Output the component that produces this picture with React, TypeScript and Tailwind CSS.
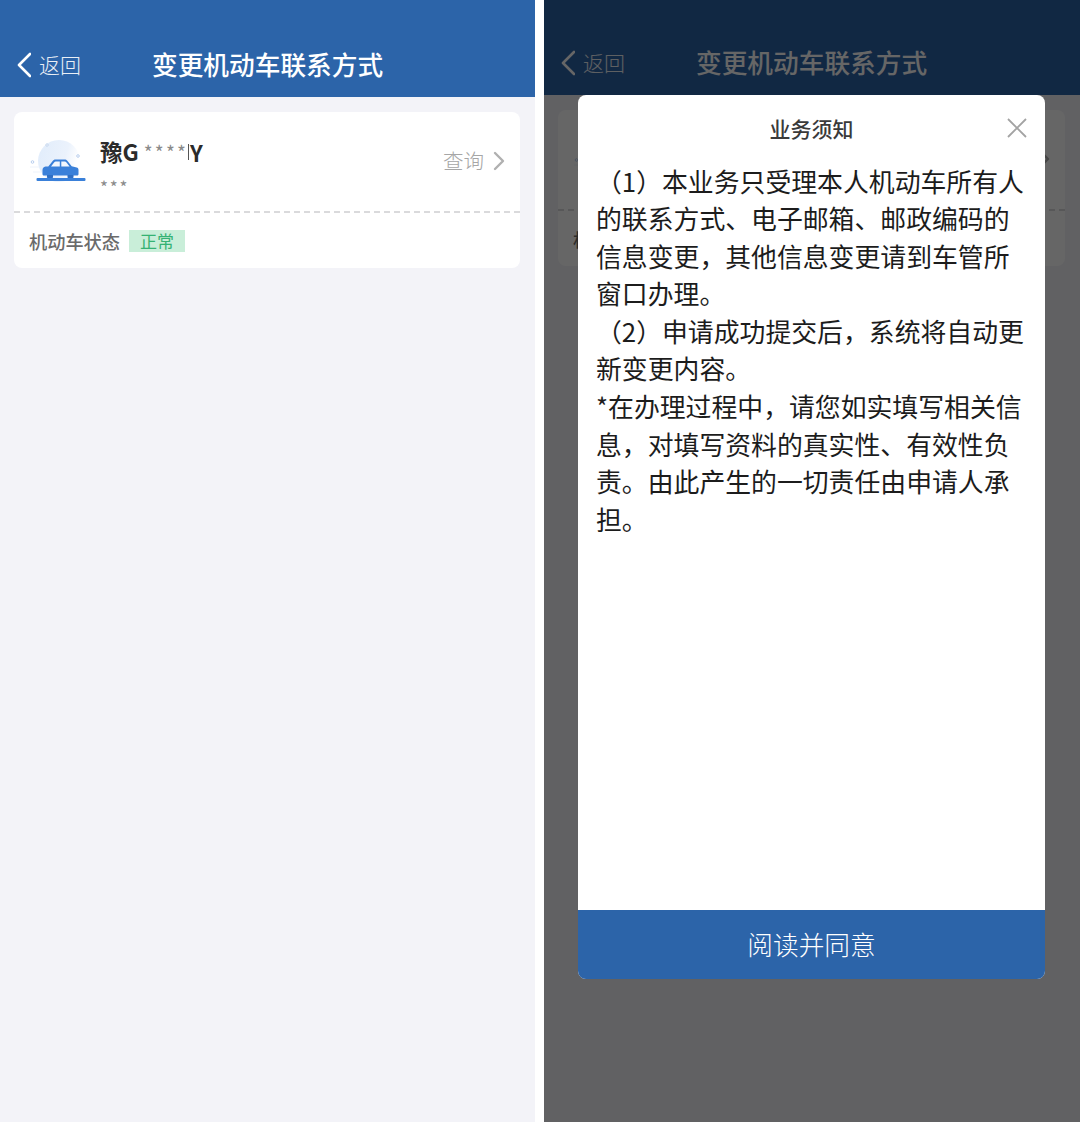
const font = "font-['Noto_Sans_CJK_SC','Noto_Sans',sans-serif]";

function CarIcon() {
  return (
    <svg viewBox="0 0 60 50" className="h-[50px] w-[60px]" aria-hidden>
      <defs>
        <linearGradient id="halo" x1="0" y1="0" x2="1" y2="0.3">
          <stop offset="0" stopColor="#e0ecfb" />
          <stop offset="0.7" stopColor="#ebf2fc" />
          <stop offset="1" stopColor="#ffffff" />
        </linearGradient>
      </defs>
      <circle cx="29" cy="24" r="21" fill="url(#halo)" />
      <path d="M0 30h9M3 35h8" stroke="#eef3fb" strokeWidth="1" />
      <circle cx="2.500" cy="25" r="1.300" fill="#fff" stroke="#a9c4ea" strokeWidth="0.8" />
      <circle cx="17" cy="8" r="1.200" fill="#fff" stroke="#b6cbe9" strokeWidth="0.8" />
      <circle cx="48" cy="19" r="1.300" fill="#fff" stroke="#a9c4ea" strokeWidth="0.8" />
      <path d="M12.500 33c0-2 1-3.300 3-3.600h2.800l4.600-5.600c.7-.8 1.500-1.200 2.700-1.200h9c1.200 0 2 .4 2.700 1.200l4.400 5.500 5 1.300c1.100.3 1.800 1.100 1.800 2.300V37c0 1-.6 1.500-1.500 1.500H14c-1 0-1.500-.5-1.500-1.500Z" fill="#3a80d9" />
      <path d="M21 29.400l3.100-3.900c.5-.6 1-.9 1.800-.9h3.900v4.800ZM31.300 24.600h3.400c.8 0 1.300.3 1.800.9l3.100 3.900h-8.300Z" fill="#f2f7fe" />
      <path d="M17 38h6v2c0 .8-.6 1.300-1.300 1.300h-3.400c-.8 0-1.300-.5-1.300-1.300ZM37.500 38h6v2c0 .8-.6 1.300-1.300 1.300h-3.400c-.8 0-1.300-.5-1.300-1.300Z" fill="#2f6fc4" />
      <rect x="6.500" y="41" width="49" height="3" rx="1" fill="#3a80d9" />
    </svg>
  );
}

function Screen({ top }: { top: string }) {
  return (
    <div className={`flex h-full flex-col ${top}`}>
      <header className="h-[97px] shrink-0 bg-[#2c64a9] text-white">
        <div className="flex h-[36px] translate-y-[46px] items-center pl-[15px]">
          <svg viewBox="0 0 16 26" className="mt-[2px] h-[26px] w-[16px]" fill="none" stroke="currentColor" strokeWidth="2.600" strokeLinecap="round" strokeLinejoin="round" aria-hidden>
            <path d="M15 2 4 13l11 11" />
          </svg>
          <span className="ml-[8px] text-[21px] leading-[30px] font-light opacity-90">返回</span>
          <h1 className="ml-[71px] text-[25.700px] leading-[36px] font-medium">变更机动车联系方式</h1>
        </div>
      </header>
      <section className="ml-[14px] mr-[15px] mt-[15px] rounded-lg bg-white">
        <div className="flex h-[101px] items-center border-b-2 border-dashed border-[#dadadc] pl-[16px] pr-[15px]">
          <CarIcon />
          <div className="ml-[10px] flex-1 pt-[11px]">
            <div className="flex h-[28px] items-center text-[#2b2b2b]">
              <span className="text-[22.600px] font-bold leading-[28px]">豫G</span>
              <span className="ml-[5px] text-[19px] leading-[28px] tracking-[2.200px] text-[#8a8a8a]">****</span>
              <span className="h-[16px] w-px bg-[#555]" />
              <span className="ml-px text-[22px] font-bold leading-[28px]">Y</span>
            </div>
            <div className="mt-[11px] h-[20px] text-[17px] leading-[20px] tracking-[1.800px] text-[#8a8a8a]">***</div>
          </div>
          <span className="mb-[3px] text-[20.500px] font-light leading-[28px] text-[#a6a6a6]">查询</span>
          <svg viewBox="0 0 12 20" className="mb-[1px] ml-[9px] h-[20px] w-[12px]" fill="none" stroke="#b0b0b0" strokeWidth="2.400" strokeLinecap="round" strokeLinejoin="round" aria-hidden>
            <path d="M2 2l8 8-8 8" />
          </svg>
        </div>
        <div className="flex h-[55px] items-center pl-[15px]">
          <span className="text-[18.200px] font-medium leading-[26px] text-[#6b6b6b]">机动车状态</span>
          <span className="ml-[9px] flex h-[22px] w-[56px] items-center justify-center bg-[#c9eed9] text-[17px] leading-[22px] text-[#35b274]">正常</span>
        </div>
      </section>
    </div>
  );
}

export default function App() {
  return (
    <div className={`${font} flex h-[1122px] w-[1080px] overflow-hidden bg-white`}>
      <div className="h-full w-[535px] shrink-0 bg-[#f3f3f8]">
        <Screen top="" />
      </div>
      <div className="relative ml-[9px] h-full w-[536px] shrink-0 overflow-hidden bg-[#f3f3f8]">
        <Screen top="-translate-y-[2px]" />
        {/* dim layer + notice dialog */}
        <div className="absolute inset-0 bg-black/60" />
        <div className="absolute left-[34px] top-[95px] flex h-[884px] w-[467px] flex-col overflow-hidden rounded-lg bg-white">
          <div className="relative flex h-[50px] shrink-0 items-end justify-center pb-[2px]">
            <h2 className="text-[21px] font-medium leading-[30px] text-[#3a3a3a]">业务须知</h2>
            <svg viewBox="0 0 22 22" className="absolute right-[17px] top-[22px] h-[22px] w-[22px]" fill="none" stroke="#a3a3a3" strokeWidth="1.800" aria-hidden>
              <path d="M2 2l18 18M20 2 2 20" />
            </svg>
          </div>
          <div className="flex-1 pl-[18px] pr-[18px] pt-[16.500px] text-[25.850px] leading-[37.600px] text-[#1c1c1c]">
            <p>（1）本业务只受理本人机动车所有人的联系方式、电子邮箱、邮政编码的信息变更，其他信息变更请到车管所窗口办理。</p>
            <p>（2）申请成功提交后，系统将自动更新变更内容。</p>
            <p>*在办理过程中，请您如实填写相关信息，对填写资料的真实性、有效性负责。由此产生的一切责任由申请人承担。</p>
          </div>
          <button type="button" className="h-[69px] shrink-0 bg-[#2c64a9] text-[25.700px] font-light text-white">
            阅读并同意
          </button>
        </div>
      </div>
    </div>
  );
}
